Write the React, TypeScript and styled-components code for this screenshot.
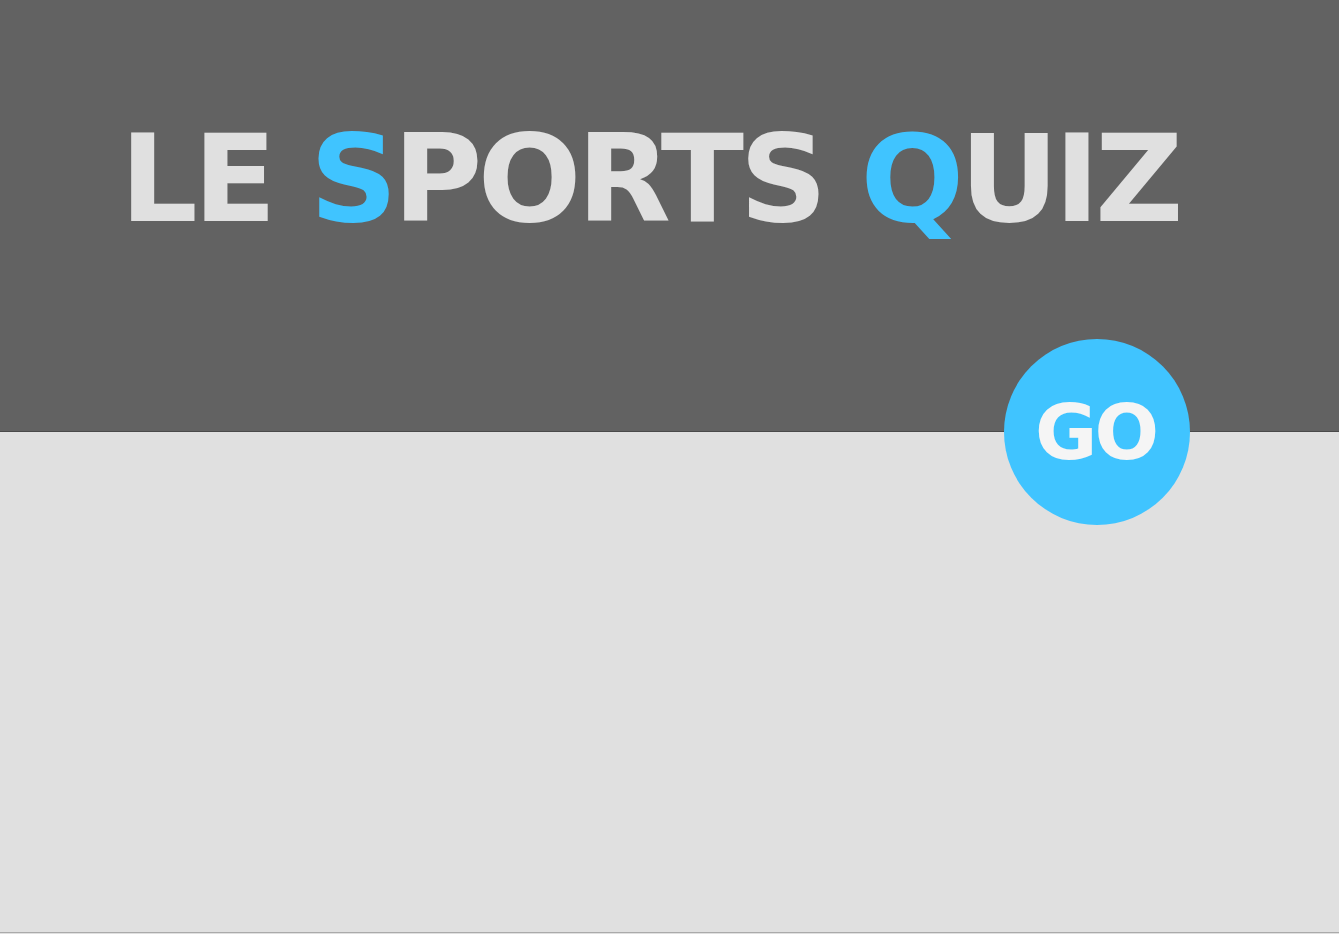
import * as React from 'react'
import styled, { createGlobalStyle } from 'styled-components'

const GlobalStyle = createGlobalStyle`
  html, body {
    margin: 0;
    padding: 0;
    background: #e0e0e0;
  }
`

const Page = styled.div`
  display: flex;
  flex-direction: column;
  font-family: 'DejaVu Sans', 'Liberation Sans', sans-serif;
`

const Header = styled.header`
  position: relative;
  height: 432px;
  background: #626262;
  border-bottom: 1px solid #4a4a4a;
  box-sizing: border-box;
  padding-top: 118px;
  padding-left: 120px;
`

const Title = styled.h1`
  margin: 0;
  font-size: 122px;
  line-height: 1;
  font-weight: bold;
  letter-spacing: -4.6px;
  color: #e0e0e0;
  white-space: nowrap;
`

const Accent = styled.span`
  color: #40c4ff;
`

const GoButton = styled.button`
  position: absolute;
  left: 1004px;
  top: 339px;
  width: 186px;
  height: 186px;
  border-radius: 50%;
  border: none;
  background: #40c4ff;
  color: #f5f5f5;
  font-family: 'DejaVu Sans', sans-serif;
  font-weight: bold;
  font-size: 76px;
  letter-spacing: -3px;
  display: flex;
  align-items: center;
  justify-content: center;
  padding: 0 3px 0 0;
  cursor: pointer;
  z-index: 1;
`

const Body = styled.main`
  height: 501px;
  background: #e0e0e0;
  border-bottom: 1px solid #aaaaaa;
  box-sizing: border-box;
`

const App = () => {
  return (
    <Page>
      <GlobalStyle />
      <Header>
        <Title>
          LE <Accent>S</Accent>PORTS <Accent>Q</Accent>UIZ
        </Title>
        <GoButton>GO</GoButton>
      </Header>
      <Body />
    </Page>
  )
}

export default App
